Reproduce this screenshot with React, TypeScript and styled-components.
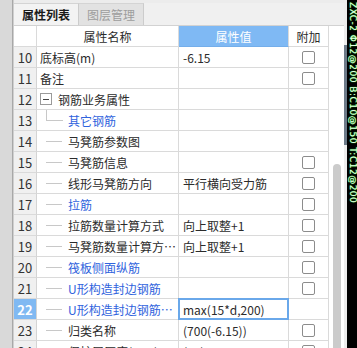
import React from "react";
import styled, { createGlobalStyle, css } from "styled-components";

const Global = createGlobalStyle`
  html, body { margin: 0; padding: 0; }
  body {
    width: 357px; height: 348px; overflow: hidden;
    font-family: "Noto Sans CJK SC", "Microsoft YaHei", sans-serif;
    background: #dcdcdc;
  }
  #root { height: 348px; }
`;

const Shell = styled.div`
  display: flex;
  height: 348px;
  width: 357px;
  overflow: hidden;
`;

const Gutter = styled.div`
  width: 12px;
  flex: none;
  background: #d9d9d9;
  border-right: 1px solid #a8a8a8;
`;

const Panel = styled.div`
  width: 331px;
  flex: none;
  display: flex;
  flex-direction: column;
  background: #ffffff;
  border-left: 1px solid #cfcfcf;
  box-sizing: border-box;
`;

const TopStrip = styled.div`
  height: 3px;
  background: #ececec;
  flex: none;
`;

const TabBar = styled.div`
  height: 23px;
  flex: none;
  display: flex;
  align-items: stretch;
  background: #f0f0f0;
  border-bottom: 1px solid #d2d2d2;
  box-sizing: border-box;
`;

const Tab = styled.div<{ $active?: boolean }>`
  width: 65px;
  display: flex;
  align-items: center;
  justify-content: center;
  font-size: 12px;
  box-sizing: border-box;
  border-right: 1px solid #cccccc;
  border-top: 1px solid #d4d4d4;
  ${(p) =>
    p.$active
      ? css`
          background: #f3f3f3;
          color: #1a1a1a;
          font-weight: 700;
        `
      : css`
          background: #e2e2e2;
          color: #9d9d9d;
        `}
`;

const Body = styled.div`
  flex: 1;
  display: flex;
  min-height: 0;
`;

const Grid = styled.div`
  display: grid;
  grid-template-columns: 23px 142px 110px 40px;
  grid-auto-rows: 21px;
  width: 315px;
  flex: none;
  align-content: start;
`;

const Cell = styled.div`
  box-sizing: border-box;
  border-right: 1px solid #dadada;
  border-bottom: 1px solid #dadada;
  display: flex;
  align-items: center;
  font-size: 12px;
  color: #2b2b2b;
  white-space: nowrap;
  overflow: hidden;
  position: relative;
`;

const HeadCell = styled(Cell)<{ $accent?: boolean }>`
  justify-content: center;
  background: ${(p) => (p.$accent ? "#7fb9f4" : "#ffffff")};
  color: ${(p) => (p.$accent ? "#ffffff" : "#2b2b2b")};
  border-bottom-color: ${(p) => (p.$accent ? "#74aeea" : "#dadada")};
`;

const NumCell = styled(Cell)<{ $sel?: boolean }>`
  justify-content: center;
  font-size: 13px;
  background: ${(p) => (p.$sel ? "#80b9f2" : "#f0f0f0")};
  color: ${(p) => (p.$sel ? "#ffffff" : "#333333")};
  font-weight: ${(p) => (p.$sel ? 700 : 400)};
  border-right-color: #d4d4d4;
`;

const NameCell = styled(Cell)<{ $blue?: boolean; $child?: boolean; $group?: boolean }>`
  padding-left: ${(p) => (p.$child ? 31 : p.$group ? 3 : 3)}px;
  color: ${(p) => (p.$blue ? "#2f63dd" : "#2b2b2b")};
`;

const Connector = styled.span<{ $first?: boolean }>`
  position: absolute;
  left: 9px;
  top: 0;
  width: 16px;
  height: 10px;
  border-bottom: 1px solid #c8c8c8;
  ${(p) =>
    p.$first &&
    css`
      border-left: 1px solid #c8c8c8;
    `}
`;

const Toggle = styled.span`
  width: 12px;
  height: 12px;
  box-sizing: border-box;
  border: 1px solid #9a9a9a;
  background: #fff;
  display: inline-flex;
  align-items: center;
  justify-content: center;
  margin-right: 6px;
  flex: none;
  &::before {
    content: "";
    width: 6px;
    height: 1px;
    background: #444;
  }
`;

const ValueCell = styled(Cell)<{ $edit?: boolean }>`
  padding-left: 4px;
  ${(p) =>
    p.$edit &&
    css`
      overflow: visible;
      &::after {
        content: "";
        position: absolute;
        left: -1px;
        top: -1px;
        right: -1px;
        bottom: -1px;
        border: 2px solid #6aa8ea;
        pointer-events: none;
      }
    `}
`;

const CheckCell = styled(Cell)`
  justify-content: center;
  padding-right: 1px;
`;

const Box = styled.span`
  width: 13px;
  height: 13px;
  box-sizing: border-box;
  border: 1px solid #8c8c8c;
  border-radius: 2px;
  background: #fff;
`;

const ScrollArea = styled.div`
  flex: 1;
  display: flex;
  flex-direction: column;
  align-items: flex-start;
  padding-left: 4px;
  padding-top: 138px;
  background: #ffffff;
  overflow: hidden;
`;

const Thumb = styled.div`
  width: 8px;
  height: 220px;
  flex: none;
  border-radius: 4px;
  background: #cbcbcb;
`;

const Splitter = styled.div`
  width: 3px;
  flex: none;
  background: #ededed;
  display: flex;
  flex-direction: column;
  padding-top: 45px;
  box-sizing: border-box;
`;

const SplitGrip = styled.div`
  height: 100px;
  background: #6d7b89;
`;

const Canvas = styled.div`
  flex: 1;
  background: #000;
  overflow: hidden;
  display: flex;
  justify-content: center;
`;

const CadText = styled.div`
  writing-mode: vertical-rl;
  font-family: "DejaVu Sans", sans-serif;
  font-size: 9px;
  line-height: 9px;
  color: #e8ffe8;
  text-shadow: 0 0 1px #19c219, 0 0 1px #19c219;
  white-space: nowrap;
  letter-spacing: 0.5px;
  margin-top: 2px;
`;

type Row = {
  n: number;
  name: string;
  value?: string;
  check?: boolean;
  blue?: boolean;
  child?: boolean;
  group?: boolean;
  first?: boolean;
  edit?: boolean;
};

const rows: Row[] = [
  { n: 10, name: "底标高(m)", value: "-6.15", check: true },
  { n: 11, name: "备注", check: true },
  { n: 12, name: "钢筋业务属性", group: true },
  { n: 13, name: "其它钢筋", child: true, blue: true, first: true },
  { n: 14, name: "马凳筋参数图", child: true },
  { n: 15, name: "马凳筋信息", child: true, check: true },
  { n: 16, name: "线形马凳筋方向", value: "平行横向受力筋", child: true, check: true },
  { n: 17, name: "拉筋", child: true, blue: true, check: true },
  { n: 18, name: "拉筋数量计算方式", value: "向上取整+1", child: true, check: true },
  { n: 19, name: "马凳筋数量计算方…", value: "向上取整+1", child: true, check: true },
  { n: 20, name: "筏板侧面纵筋", child: true, blue: true, check: true },
  { n: 21, name: "U形构造封边钢筋", child: true, blue: true, check: true },
  { n: 22, name: "U形构造封边钢筋…", value: "max(15*d,200)", child: true, blue: true, edit: true },
  { n: 23, name: "归类名称", value: "(700(-6.15))", child: true, check: true },
  { n: 24, name: "保护层厚度(mm)", value: "(40)", child: true, check: true },
];

export default function App() {
  return (
    <>
      <Global />
      <Shell>
        <Gutter />
        <Panel>
          <TopStrip />
          <TabBar>
            <Tab $active>属性列表</Tab>
            <Tab>图层管理</Tab>
          </TabBar>
          <Body>
            <Grid>
              <HeadCell />
              <HeadCell>属性名称</HeadCell>
              <HeadCell $accent>属性值</HeadCell>
              <HeadCell>附加</HeadCell>
              {rows.map((r) => (
                <React.Fragment key={r.n}>
                  <NumCell $sel={r.edit}>{r.n}</NumCell>
                  <NameCell $blue={r.blue} $child={r.child} $group={r.group}>
                    {r.child && <Connector $first={r.first} />}
                    {r.group && <Toggle />}
                    {r.name}
                  </NameCell>
                  <ValueCell $edit={r.edit}>{r.value}</ValueCell>
                  <CheckCell>{r.check && <Box />}</CheckCell>
                </React.Fragment>
              ))}
            </Grid>
            <ScrollArea>
              <Thumb />
            </ScrollArea>
          </Body>
        </Panel>
        <Splitter>
          <SplitGrip />
        </Splitter>
        <Canvas>
          <CadText>ZXC-2 Φ12@200 B:C10@150 T:C12@200</CadText>
        </Canvas>
      </Shell>
    </>
  );
}
